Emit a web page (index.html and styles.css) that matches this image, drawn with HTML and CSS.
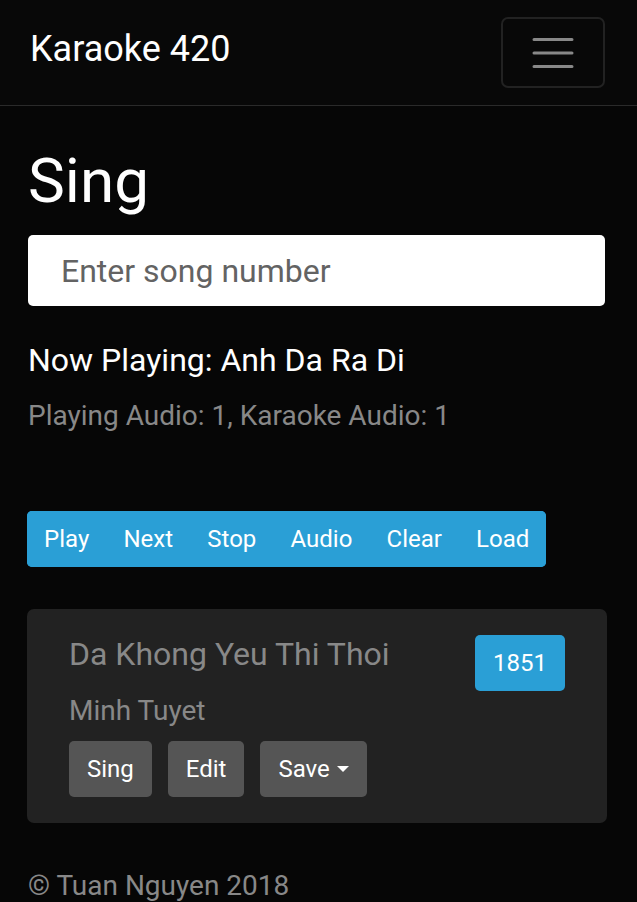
FILE: index.html
```html
<!DOCTYPE html>
<html lang="en">
<head>
<meta charset="utf-8">
<title>Karaoke 420</title>
<link rel="stylesheet" href="styles.css">
</head>
<body>
<nav class="navbar">
  <a class="brand" href="#">Karaoke 420</a>
  <button class="toggler" type="button" aria-label="Toggle navigation">
    <svg class="toggler-icon" width="42" height="30" viewBox="0 0 42 30">
      <path d="M2 1.5H40M2 15H40M2 28.5H40" stroke="#888" stroke-width="3" stroke-linecap="round" fill="none"/>
    </svg>
  </button>
</nav>
<main class="container">
  <h1 class="page-title">Sing</h1>
  <input class="song-input" type="text" placeholder="Enter song number">
  <h5 class="now-playing">Now Playing: Anh Da Ra Di</h5>
  <p class="audio-info">Playing Audio: 1, Karaoke Audio: 1</p>
  <div class="btn-group">
    <button class="btn btn-primary">Play</button>
    <button class="btn btn-primary">Next</button>
    <button class="btn btn-primary">Stop</button>
    <button class="btn btn-primary">Audio</button>
    <button class="btn btn-primary">Clear</button>
    <button class="btn btn-primary">Load</button>
  </div>
  <div class="card">
    <h4 class="song-title">Da Khong Yeu Thi Thoi</h4>
    <span class="badge">1851</span>
    <h6 class="song-artist">Minh Tuyet</h6>
    <div class="card-actions">
      <button class="btn btn-secondary">Sing</button>
      <button class="btn btn-secondary">Edit</button>
      <button class="btn btn-secondary dropdown-toggle">Save<span class="caret"></span></button>
    </div>
  </div>
  <footer class="footer">© Tuan Nguyen 2018</footer>
</main>
</body>
</html>
```
FILE: styles.css
```css
* { box-sizing: border-box; }
html, body {
  margin: 0;
  padding: 0;
  background: #060606;
  font-family: Roboto, "Noto Sans", sans-serif;
  color: #fff;
}
.navbar {
  height: 106px;
  border-bottom: 1px solid #2a2a2a;
  display: flex;
  align-items: center;
  justify-content: space-between;
  padding: 0 32px 0 30px;
  background: #080808;
}
.brand {
  color: #fff;
  text-decoration: none;
  font-size: 36px;
  line-height: 1.2;
  margin-top: -6px;
}
.toggler {
  width: 104px;
  height: 71px;
  background: transparent;
  border: 2px solid #222;
  border-radius: 7px;
  display: flex;
  align-items: center;
  justify-content: center;
  padding: 0;
}
.container {
  padding: 0 30px 0 27px;
}
.page-title {
  margin: 38px 0 0 1px;
  font-size: 62px;
  font-weight: 400;
  line-height: 1.2;
}
.song-input {
  display: block;
  width: calc(100% - 3px);
  margin: 17px 0 0 1px;
  height: 71px;
  border: none;
  border-radius: 5px;
  background: #fff;
  padding: 0 33px;
  font-family: Roboto, sans-serif;
  font-size: 32px;
  color: #222;
}
.song-input::placeholder { color: #636363; }
.now-playing {
  margin: 35px 0 0 1px;
  font-size: 32px;
  font-weight: 400;
  line-height: 1.2;
}
.audio-info {
  margin: 15px 0 0 1px;
  font-size: 28px;
  line-height: 1.5;
  color: #888;
}
.btn {
  font-family: Roboto, sans-serif;
  font-size: 24px;
  line-height: 36px;
  padding: 10px 18px;
  border: none;
  color: #fff;
  border-radius: 5px;
  cursor: pointer;
}
.btn-group {
  display: inline-flex;
  margin-top: 74px;
  border-radius: 5px;
  overflow: hidden;
  background: #2a9fd6;
}
.btn-group .btn { border-radius: 0; padding: 10px 17.1px; }
.btn-primary { background: #2a9fd6; }
.btn-secondary { background: #555; }
.card {
  margin-top: 42px;
  background: #222;
  border-radius: 7px;
  padding: 26px 42px;
  display: grid;
  grid-template-columns: 1fr auto;
  align-items: start;
}
.song-title {
  grid-column: 1;
  margin: 0;
  font-size: 32px;
  font-weight: 400;
  line-height: 1.2;
  color: #888;
}
.badge {
  grid-column: 2;
  grid-row: 1 / span 2;
  width: 90px;
  height: 56px;
  border-radius: 5px;
  background: #2a9fd6;
  color: #fff;
  font-size: 24px;
  display: flex;
  align-items: center;
  justify-content: center;
}
.song-artist {
  grid-column: 1;
  grid-row: 2;
  margin: 21px 0 0;
  font-size: 28px;
  font-weight: 400;
  line-height: 1.2;
  color: #888;
}
.card-actions {
  grid-column: 1 / span 2;
  grid-row: 3;
  display: flex;
  gap: 16px;
  margin-top: 13px;
}
.dropdown-toggle { display: inline-flex; align-items: center; }
.caret {
  display: inline-block;
  width: 0;
  height: 0;
  margin-left: 7px;
  border-top: 6px solid #fff;
  border-left: 6px solid transparent;
  border-right: 6px solid transparent;
}
.footer {
  margin-top: 42px;
  margin-left: 1px;
  font-size: 28px;
  line-height: 1.5;
  color: #888;
}
```
